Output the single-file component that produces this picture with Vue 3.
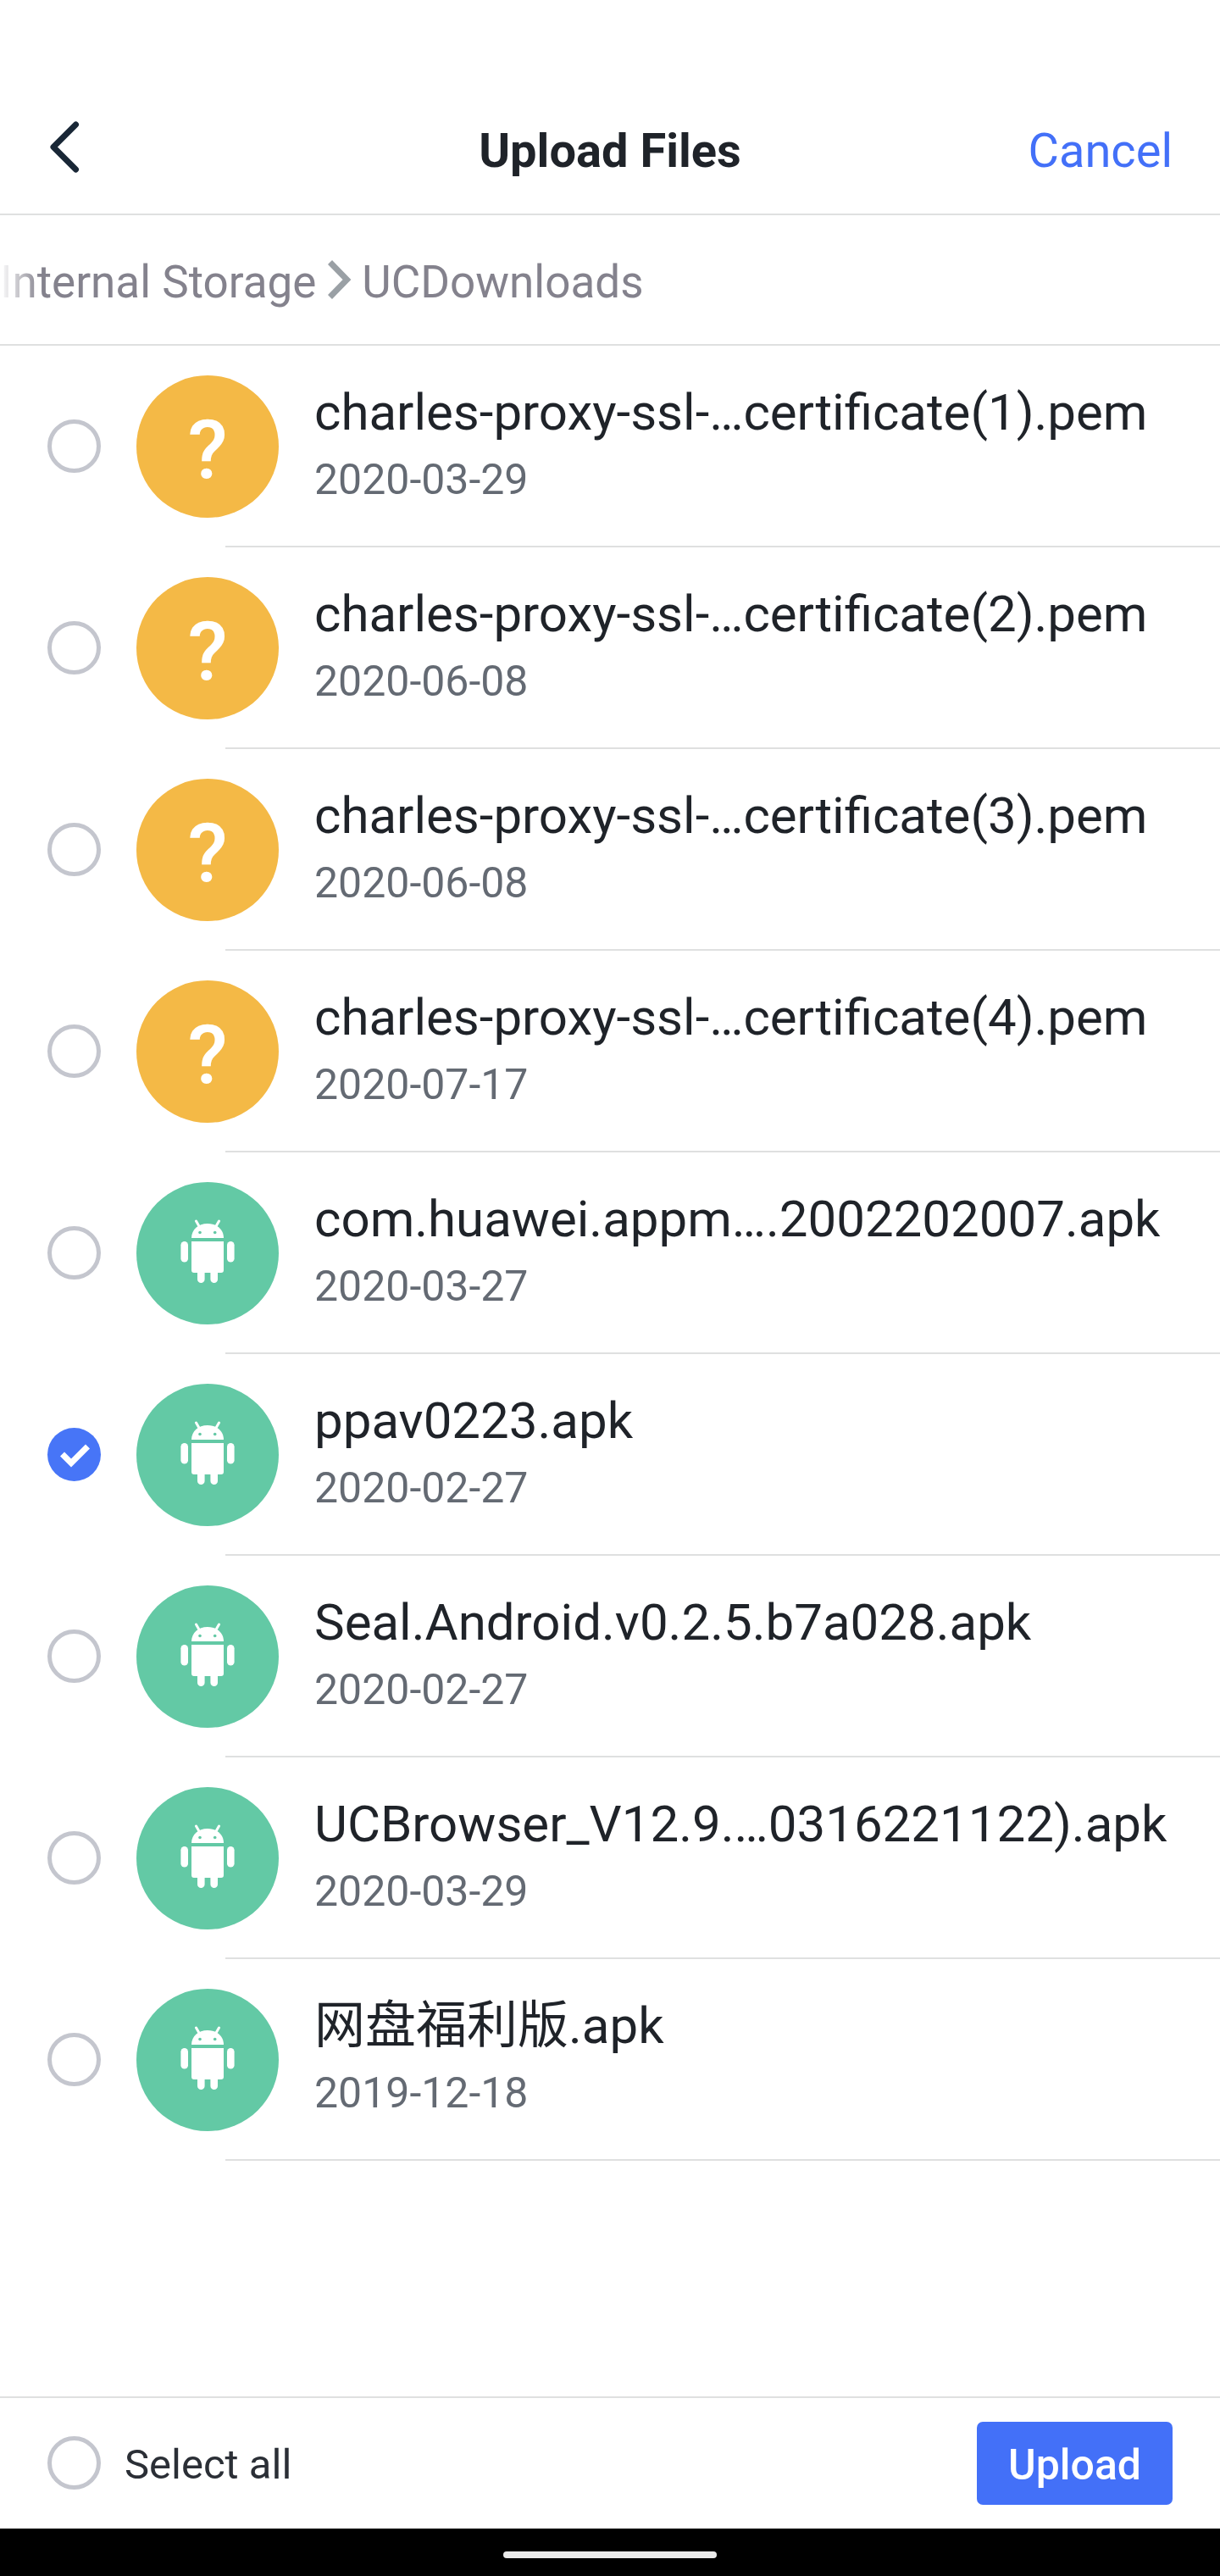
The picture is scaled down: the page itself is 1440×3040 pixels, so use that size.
<script setup>
import { ref, computed } from 'vue'

const files = ref([
  { name: 'charles-proxy-ssl-…certificate(1).pem', date: '2020-03-29', type: 'unknown', selected: false },
  { name: 'charles-proxy-ssl-…certificate(2).pem', date: '2020-06-08', type: 'unknown', selected: false },
  { name: 'charles-proxy-ssl-…certificate(3).pem', date: '2020-06-08', type: 'unknown', selected: false },
  { name: 'charles-proxy-ssl-…certificate(4).pem', date: '2020-07-17', type: 'unknown', selected: false },
  { name: 'com.huawei.appm….2002202007.apk', date: '2020-03-27', type: 'apk', selected: false },
  { name: 'ppav0223.apk', date: '2020-02-27', type: 'apk', selected: true },
  { name: 'Seal.Android.v0.2.5.b7a028.apk', date: '2020-02-27', type: 'apk', selected: false },
  { name: 'UCBrowser_V12.9.…0316221122).apk', date: '2020-03-29', type: 'apk', selected: false },
  { name: '网盘福利版.apk', date: '2019-12-18', type: 'apk', selected: false },
])

const allSelected = computed({
  get: () => files.value.every((f) => f.selected),
  set: (value) => files.value.forEach((f) => { f.selected = value }),
})
</script>

<template>
  <div class="page">
    <header class="toolbar">
      <button class="back" type="button" aria-label="Back">
        <svg width="40" height="64" viewBox="0 0 40 64" fill="none" stroke="#192736" stroke-width="7" stroke-linecap="round" stroke-linejoin="round">
          <path d="M33.500 4 7 30.500 33.500 57" />
        </svg>
      </button>
      <h1 class="title">Upload Files</h1>
      <button class="cancel" type="button">Cancel</button>
    </header>

    <nav class="crumbs" aria-label="Folder path">
      <a class="crumb" href="#storage">Internal Storage</a>
      <svg class="chevron" width="28" height="48" viewBox="0 0 28 48" fill="none" stroke="#9aa0a5" stroke-width="7">
        <path d="M2.500 3.500 22.500 24 2.500 44.500" />
      </svg>
      <a class="crumb" href="#downloads">UCDownloads</a>
    </nav>

    <main class="content">
      <ul class="files">
        <li v-for="(file, i) in files" :key="i">
          <label class="row">
            <input v-model="file.selected" class="check" type="checkbox" />
            <span v-if="file.type === 'unknown'" class="avatar unknown" aria-hidden="true">?</span>
            <span v-else class="avatar apk" aria-hidden="true">
              <svg width="168" height="168" viewBox="0 0 168 168" fill="#fff">
                <path d="M70.500 46 74.500 53M97.500 46 93.500 53" stroke="#fff" stroke-width="3" stroke-linecap="round" />
                <path d="M65 66C65 56 73 49 84 49S103 56 103 66Z" />
                <circle cx="75" cy="59.500" r="1.800" fill="#63c9a5" />
                <circle cx="92.700" cy="59.500" r="1.800" fill="#63c9a5" />
                <path d="M65 70H103V104Q103 107 100 107H96V114.700A4.300 4.300 0 0 1 87.400 114.700V107H80.600V114.700A4.300 4.300 0 0 1 72 114.700V107H68Q65 107 65 104Z" />
                <rect x="52.400" y="70" width="8.600" height="24.500" rx="4.300" />
                <rect x="107" y="70" width="8.600" height="24.500" rx="4.300" />
              </svg>
            </span>
            <span class="info">
              <span class="name">{{ file.name }}</span>
              <time class="date" :datetime="file.date">{{ file.date }}</time>
            </span>
          </label>
        </li>
      </ul>
    </main>

    <footer class="actions">
      <label class="select-all">
        <input v-model="allSelected" class="check" type="checkbox" />
        <span class="select-text">Select all</span>
      </label>
      <button class="upload" type="button">Upload</button>
    </footer>
    <div class="system-bar"><span class="handle"></span></div>
  </div>
</template>

<style>
body {
  margin: 0;
  background: #fff;
}
</style>

<style scoped>
.page {
  display: flex;
  flex-direction: column;
  min-height: 100vh;
  font-family: Roboto, "Noto Sans CJK SC", sans-serif;
  color: #1f2329;
  background: #fff;
}

button {
  margin: 0;
  padding: 0;
  border: 0;
  background: none;
  font-family: inherit;
  cursor: pointer;
}

.toolbar {
  display: grid;
  grid-template-columns: 1fr auto 1fr;
  align-items: center;
  height: 154px;
  padding: 98px 56px 0;
  border-bottom: 2px solid #dfe0e0;
}

.back {
  display: flex;
  justify-self: start;
}

.title,
.cancel {
  padding-top: 6px;
  font-size: 56px;
  line-height: 66px;
}

.title {
  margin: 0;
  font-weight: 700;
}

.cancel {
  justify-self: end;
  color: #4370f8;
}

.crumbs {
  position: relative;
  display: flex;
  align-items: center;
  height: 152px;
  border-bottom: 2px solid #dfe0e0;
}

.crumbs::before {
  content: "";
  position: absolute;
  top: 0;
  bottom: 0;
  left: 0;
  width: 48px;
  background: linear-gradient(to right, #fff, rgba(255, 255, 255, 0));
}

.crumb {
  padding-top: 6px;
  font-size: 53px;
  line-height: 62px;
  color: #84828d;
  text-decoration: none;
  white-space: nowrap;
}

.chevron {
  margin: 0 12px 0 14px;
}

.content {
  flex: 1;
}

.files {
  margin: 0;
  padding: 0;
  list-style: none;
}

.row {
  position: relative;
  display: flex;
  align-items: center;
  height: 238px;
  padding: 0 56px;
}

.row::after {
  content: "";
  position: absolute;
  right: 0;
  bottom: 0;
  left: 266px;
  height: 2px;
  background: #dfe0e0;
}

.check {
  flex: none;
  width: 63px;
  height: 63px;
  margin: 0 0 2px;
  border: 5px solid #c4c6ce;
  border-radius: 50%;
  appearance: none;
  background: #fff;
}

.check:checked {
  border: 0;
  background: #4775f7;
}

.check:checked::after {
  content: "";
  display: block;
  width: 63px;
  height: 63px;
  background: #fff;
  clip-path: polygon(15px 34px, 20px 29px, 28px 37px, 45px 20px, 50px 25px, 28px 47px);
}

.avatar {
  flex: none;
  width: 168px;
  height: 168px;
  margin: 0 42px;
  border-radius: 50%;
  color: #fff;
}

.avatar svg {
  display: block;
}

.unknown {
  background: #f4b946;
  font-size: 97px;
  font-weight: 500;
  line-height: 176px;
  text-align: center;
}

.apk {
  background: #63c9a5;
}

.info {
  display: flex;
  flex-direction: column;
  gap: 10px;
  padding-bottom: 2px;
  white-space: nowrap;
}

.name {
  font-size: 60px;
  line-height: 70px;
}

.date {
  font-size: 50px;
  line-height: 68px;
  color: #646a73;
}

.actions {
  display: flex;
  align-items: center;
  justify-content: space-between;
  height: 154px;
  padding: 0 56px;
  border-top: 2px solid #dfe0e0;
}

.select-all {
  display: flex;
  align-items: center;
  gap: 28px;
}

.select-text {
  padding-top: 4px;
  font-size: 49px;
  line-height: 58px;
  color: #2b2f36;
}

.upload {
  width: 231px;
  height: 98px;
  padding-top: 4px;
  border-radius: 7px;
  background: #4370f8;
  color: #fff;
  font-size: 50px;
  font-weight: 500;
  line-height: 58px;
}

.system-bar {
  display: flex;
  align-items: center;
  justify-content: center;
  height: 50px;
  padding-top: 6px;
  background: #000;
}

.handle {
  width: 252px;
  height: 8px;
  border-radius: 4px;
  background: #ebebeb;
}
</style>
